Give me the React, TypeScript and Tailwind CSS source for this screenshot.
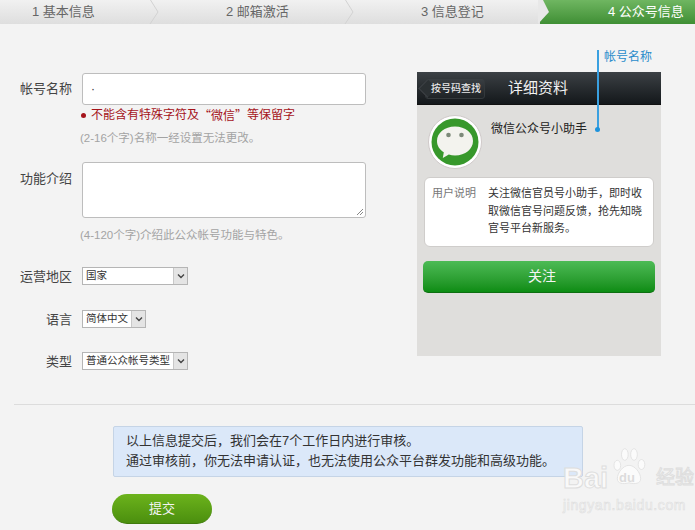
const font = "font-['Liberation_Sans','Noto_Sans_CJK_SC',sans-serif]";

const Steps = () => (
  <div className="flex h-6 bg-gradient-to-b from-[#f1f1f1] to-[#dedede] text-[13px] leading-6 text-[#666]">
    <div className="w-[156px] pl-8 relative">
      1 基本信息
      <Chevron />
    </div>
    <div className="w-[195px] pl-[70px] relative">
      2 邮箱激活
      <Chevron />
    </div>
    <div className="w-[189px] pl-[70px]">3 信息登记</div>
    <div className="relative flex-1 pl-[68px] text-white bg-gradient-to-b from-[#6fb661] to-[#3f8f34]">
      <svg className="absolute left-[-2px] top-0" width="12" height="24" viewBox="0 0 12 24">
        <path d="M0 0H5L11 12L0 24Z" fill="#e8e8e8" />
      </svg>
      <span className="relative">4 公众号信息</span>
    </div>
  </div>
);

const Chevron = () => (
  <svg className="absolute right-[-5px] top-0" width="12" height="24" viewBox="0 0 12 24" fill="none">
    <path d="M1.5 0L9 12L1 24" stroke="#d2d2d2" />
  </svg>
);

const Select = ({ label, width }: { label: string; width: string }) => (
  <div className={`flex h-[18px] items-center border border-[#b5b5b5] bg-white pl-[3px] text-[10.5px] text-[#333] ${width}`}>
    <span className="flex-1 whitespace-nowrap">{label}</span>
    <span className="flex h-full w-[14px] shrink-0 items-center justify-center border-l border-[#c8c8c8] bg-[#e4e4e4]">
      <svg width="8" height="6" viewBox="0 0 8 6" fill="none">
        <path d="M1 1.500L4 4.500L7 1.500" stroke="#444" strokeWidth="1.400" />
      </svg>
    </span>
  </div>
);

const SelectRow = ({ name, label, width, className }: { name: string; label: string; width: string; className: string }) => (
  <div className={`flex items-start ${className}`}>
    <div className="w-[72px] pt-px text-right text-[13px] leading-[18px] text-[#444]">{name}</div>
    <div className="ml-[10px]">
      <Select label={label} width={width} />
    </div>
  </div>
);

const Form = () => (
  <div className="w-[417px] shrink-0 pt-[49px]">
    <div className="flex">
      <div className="w-[72px] pt-[7px] text-right text-[13px] leading-[18px] text-[#444]">帐号名称</div>
      <div className="ml-[10px]">
        <div className="h-[32px] w-[284px] rounded-[3px] border border-[#bdbdbd] bg-white pl-2 text-[12px] leading-[30px] text-[#333]">·</div>
        <div className="-ml-px mt-[2px] flex items-center whitespace-nowrap text-[12px] leading-[16px] text-[#a5141b]">
          <span className="mr-[5px] h-[5px] w-[5px] rounded-full bg-[#a5141b]" />
          不能含有特殊字符及<span className="font-['Noto_Sans_CJK_SC',sans-serif]">“微信”</span>等保留字
        </div>
        <div className="-ml-[2px] mt-[7px] text-[11.5px] leading-[16px] text-[#a3a3a3]">(2-16个字)名称一经设置无法更改。</div>
      </div>
    </div>
    <div className="mt-[16px] flex">
      <div className="w-[72px] pt-[8px] text-right text-[13px] leading-[18px] text-[#444]">功能介绍</div>
      <div className="ml-[10px]">
        <div className="relative h-[56px] w-[284px] rounded-[3px] border border-[#bdbdbd] bg-white">
          <svg className="absolute bottom-[1px] right-[1px]" width="8" height="8" viewBox="0 0 8 8" stroke="#888">
            <path d="M1 7L7 1M4 7L7 4" />
          </svg>
        </div>
        <div className="-ml-[2px] mt-[9px] text-[11.5px] leading-[16px] text-[#a3a3a3]">(4-120个字)介绍此公众帐号功能与特色。</div>
      </div>
    </div>
    <SelectRow name="运营地区" label="国家" width="w-[106px]" className="mt-[24px]" />
    <SelectRow name="语言" label="简体中文" width="w-[64px]" className="mt-[24px]" />
    <SelectRow name="类型" label="普通公众帐号类型" width="w-[106px]" className="mt-[23px]" />
  </div>
);

const WeChatAvatar = () => (
  <svg width="54" height="54" viewBox="0 0 54 54">
    <circle cx="27" cy="27" r="26.500" fill="#fff" stroke="#cfc9c9" />
    <circle cx="27" cy="27" r="23.500" fill="#37982b" />
    <path d="M27 11.500C16.500 11.500 9 18 9 26C9 30.800 11.600 34.700 15.800 37.300L14.800 43L20.800 39.600C22.800 40.200 24.900 40.500 27 40.500C37.500 40.500 45 33.900 45 26C45 18 37.500 11.500 27 11.500Z" fill="#f3f3ee" />
    <circle cx="20.500" cy="20" r="2.300" fill="#7d8a7a" />
    <circle cx="33.500" cy="20" r="2.300" fill="#7d8a7a" />
  </svg>
);

const Phone = () => (
  <div className="relative mt-12 h-[284px] w-[244px] bg-[#dfdedc]">
    <div className="flex h-[33px] items-center border-b border-[#111] bg-gradient-to-b from-[#3c4145] to-[#14181b] pl-[6px]">
      <div className="relative ml-[2px] flex h-[21px] w-[60px] items-center justify-center rounded-[3px] border border-[#33383b] bg-gradient-to-b from-[#3a3f43] to-[#1f2326] pl-[2px] text-[10px] font-medium text-[#e8e8e8]">
        <span className="absolute left-[-5px] top-[3px] h-[13px] w-[13px] rotate-45 border-b border-l border-[#3c4145] bg-[#2b3033]" />
        <span className="relative whitespace-nowrap">按号码查找</span>
      </div>
      <div className="ml-[23px] text-[15px] text-[#f2f2f2]">详细资料</div>
    </div>
    <div className="mt-[10px] flex pl-[11px]">
      <WeChatAvatar />
      <div className="ml-[9px] mt-[6px] text-[12px] leading-4 text-[#222]">微信公众号小助手</div>
    </div>
    <div className="mx-[7px] mt-[8px] flex h-[70px] rounded-md border border-[#cfcdcb] bg-white pl-[7px] pt-[7px]">
      <div className="w-[56px] shrink-0 text-[11px] leading-[17px] text-[#777]">用户说明</div>
      <div className="w-[160px] text-[11px] leading-[17.500px] text-[#333]">关注微信官员号小助手，即时收取微信官号问题反馈，抢先知晓官号平台新服务。</div>
    </div>
    <div className="mx-[6px] mt-[14px] flex h-[32px] items-center justify-center rounded-[5px] border-b border-[#0d6e10] bg-gradient-to-b from-[#4cbb55] to-[#0b8c12] pl-[6px] text-[14px] text-[#f4f4f4]">关注</div>
  </div>
);

const Annotation = () => (
  <div className="absolute left-[594px] top-[50px] h-[82px] w-[80px]">
    <div className="absolute left-[3px] top-0 h-[78px] w-[2px] bg-[#3aa0e0]" />
    <div className="absolute left-[1px] top-[77px] h-[5px] w-[5px] rounded-full bg-[#1d92dc]" />
    <div className="absolute left-[10px] top-0 whitespace-nowrap text-[12px] leading-[14px] text-[#2a8ccb]">帐号名称</div>
  </div>
);

const Watermark = () => (
  <div className="pointer-events-none absolute left-[561px] top-[447px] h-[70px] w-[134px] text-white">
    <svg className="absolute left-[46px] top-0" width="44" height="40" viewBox="0 0 44 48" fill="#fbfbfb" stroke="#e0e0e0" strokeWidth="1">
      <ellipse cx="8" cy="22" rx="4" ry="6" />
      <ellipse cx="17" cy="9" rx="4" ry="7" />
      <ellipse cx="28" cy="9" rx="4" ry="7" />
      <ellipse cx="37" cy="21" rx="4" ry="6" />
      <path d="M22 22C15 22 8 31 8 38C8 44 15 45 22 43C29 45 36 44 36 38C36 31 29 22 22 22Z" />
    </svg>
    <div className="absolute left-[2px] top-[15px] whitespace-nowrap text-[29px] font-bold leading-8 text-[#f9f9f9] [-webkit-text-stroke:1px_#dedede]">Bai</div>
    <div className="absolute left-[58px] top-[23px] text-[13px] font-bold leading-4 text-[#dcdcdc]">du</div>
    <div className="absolute left-[95px] top-[15px] whitespace-nowrap text-[19px] leading-8 text-[#f9f9f9] [-webkit-text-stroke:1px_#dedede]">经验</div>
    <div className="absolute left-[2px] top-[51px] whitespace-nowrap text-[14px] leading-[14px] tracking-[0.6px] text-[#f7f7f7] [-webkit-text-stroke:0.6px_#dedede]">jingyan.baidu.com</div>
  </div>
);

const App = () => {
  return (
    <div className={`relative h-[530px] w-[695px] overflow-hidden bg-[#f3f3f3] ${font}`}>
      <Steps />
      <div className="flex h-[380px]">
        <Form />
        <Phone />
      </div>
      <div className="ml-[14px] h-px bg-[#dcdcdc]" />
      <div className="ml-[113px] mt-[21px] h-[51px] w-[470px] rounded-[2px] border border-[#c5d4e6] bg-[#dbe8f9] pl-[12px] pt-[4px] text-[13px] leading-[20px] text-[#333]">
        <div>以上信息提交后，我们会在7个工作日内进行审核。</div>
        <div className="whitespace-nowrap">通过审核前，你无法申请认证，也无法使用公众平台群发功能和高级功能。</div>
      </div>
      <div className="ml-[112px] mt-[17px] flex h-[30px] w-[100px] items-center justify-center rounded-[15px] border-b border-[#3f7a0c] bg-gradient-to-b from-[#6cb31c] to-[#4b8f0e] text-[13px] text-[#f4f4f4]">提交</div>
      <Annotation />
      <Watermark />
    </div>
  );
};

export default App;
